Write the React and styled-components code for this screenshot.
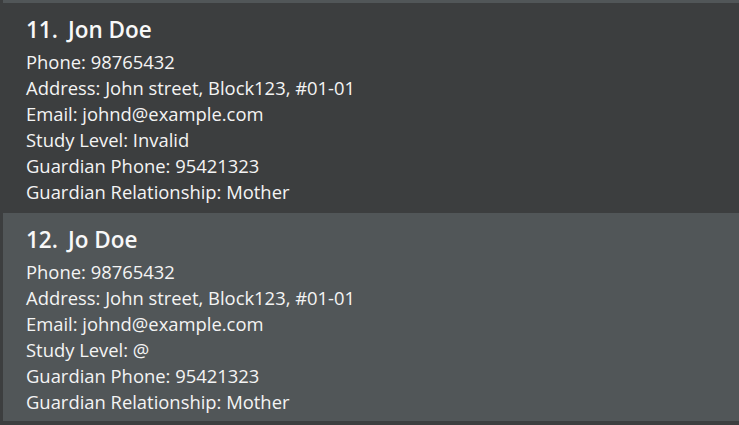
import React from 'react'
import styled, { createGlobalStyle } from 'styled-components'

const GlobalStyle = createGlobalStyle`
  html, body {
    margin: 0;
    padding: 0;
    background: #383838;
    overflow: hidden;
  }
`

const List = styled.div`
  width: 739px;
  height: 425px;
  background: #3c3e3f;
  display: flex;
  flex-direction: column;
  font-family: 'Open Sans', 'Noto Sans', sans-serif;
  overflow: hidden;
`

const Cell = styled.div`
  background: ${props => (props.odd ? '#515658' : '#3c3e3f')};
  border-left: 3px solid #3c3e3f;
  padding: ${props => props.pad || '12px 0 8px 23px'};
  flex-shrink: 0;
  height: ${props => props.h}px;
  box-sizing: border-box;
`

const Title = styled.div`
  display: flex;
  gap: 10px;
  color: #f8f8f8;
  font-size: 22.5px;
  font-weight: 600;
  line-height: 30px;
  margin-bottom: 4px;
`

const Line = styled.div`
  color: #f4f4f4;
  font-size: 18.4px;
  line-height: 26px;
  white-space: nowrap;
`

const people = [
  {
    index: 11,
    name: 'Jon Doe',
    phone: '98765432',
    address: 'John street, Block123, #01-01',
    email: 'johnd@example.com',
    level: 'Invalid',
    gPhone: '95421323',
    relation: 'Mother',
  },
  {
    index: 12,
    name: 'Jo Doe',
    phone: '98765432',
    address: 'John street, Block123, #01-01',
    email: 'johnd@example.com',
    level: '@',
    gPhone: '95421323',
    relation: 'Mother',
  },
]

function PersonCard({ person, odd }) {
  return (
    <Cell odd={odd} h={odd ? 208 : 210}>
      <Title>
        <span>{person.index}.</span>
        <span>{person.name}</span>
      </Title>
      <Line>Phone: {person.phone}</Line>
      <Line>Address: {person.address}</Line>
      <Line>Email: {person.email}</Line>
      <Line>Study Level: {person.level}</Line>
      <Line>Guardian Phone: {person.gPhone}</Line>
      <Line>Guardian Relationship: {person.relation}</Line>
    </Cell>
  )
}

export default function App() {
  return (
    <>
      <GlobalStyle />
      <List>
        <Cell odd h={3} pad="0" />
        {people.map((p, i) => (
          <PersonCard key={p.index} person={p} odd={i % 2 === 1} />
        ))}
      </List>
    </>
  )
}
